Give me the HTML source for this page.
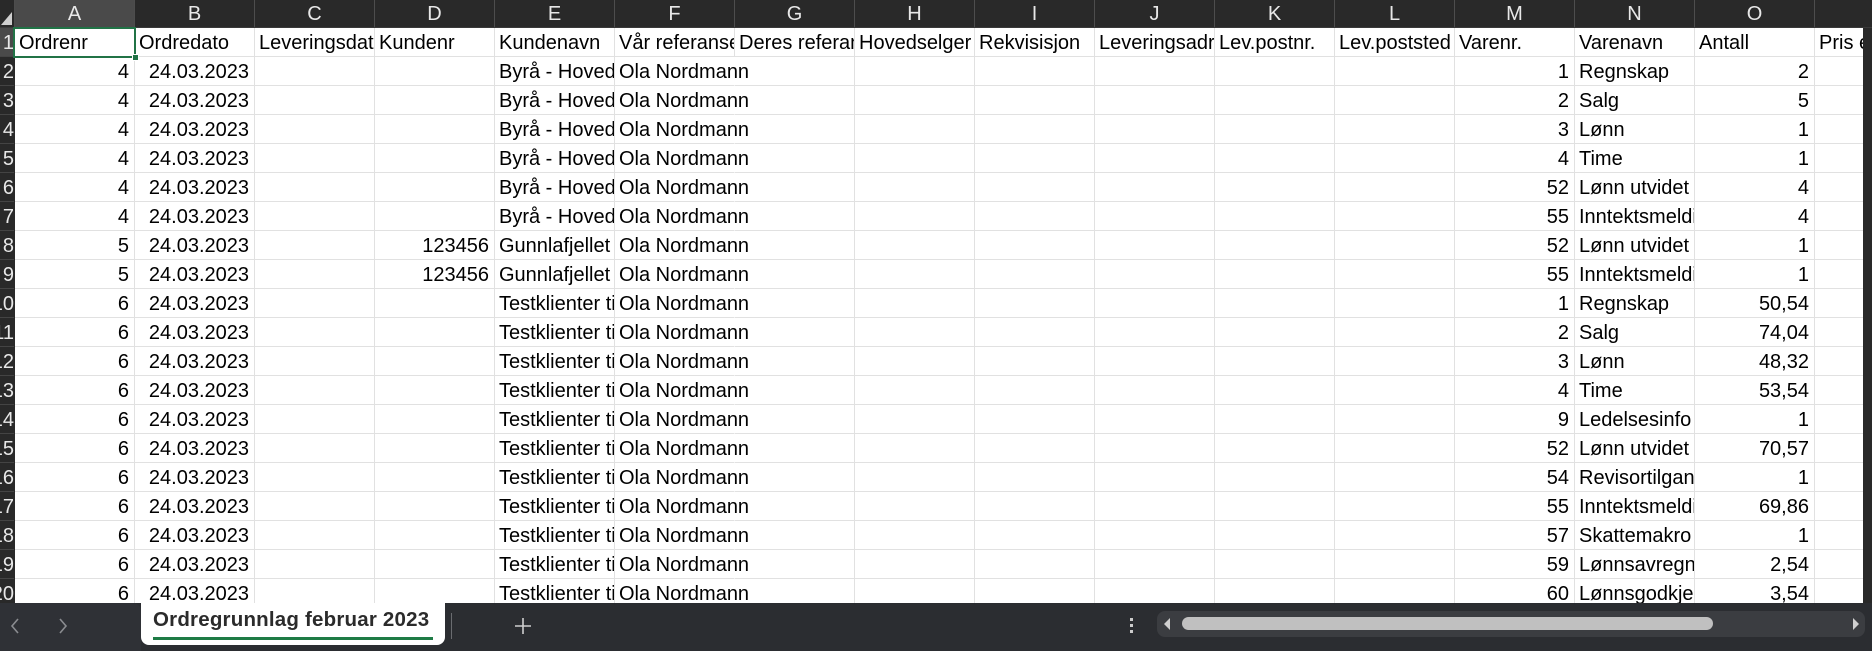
<!DOCTYPE html>
<html><head><meta charset="utf-8"><style>
*{margin:0;padding:0;box-sizing:border-box}
body{width:1872px;height:651px;overflow:hidden;background:#fff;font-family:"Liberation Sans",sans-serif;position:relative}
.hdr{position:absolute;top:0;left:0;width:1872px;height:28px;background:#292929;border-bottom:1px solid #3a3a3a}
.hdr div{position:absolute;top:0;height:27px;width:120px;border-right:1px solid #4d4d4d;color:#e8e8e8;font-size:20px;text-align:center;line-height:29px}
.rh{position:absolute;left:0;top:28px;width:15px;height:580px;background:#292929}
.rh div{position:absolute;left:0;width:14px;height:29px;border-bottom:1px solid #444;color:#e8e8e8;font-size:20px;display:flex;justify-content:flex-end;overflow:hidden;line-height:31px;padding-right:0}
.grid{position:absolute;left:15px;top:28px}
.row{position:absolute;left:0;height:29px;width:1848px}
.c{position:absolute;top:0;height:29px;width:120px;border-right:1px solid #e1e1e1;border-bottom:1px solid #e1e1e1;font-size:20px;line-height:31px;white-space:nowrap;overflow:hidden;padding:0 4px;color:#000;background:#fff}
.r{text-align:right;padding-right:5px}
.ov{overflow:visible;border-right-color:#fff;z-index:2;background:transparent}
.bar{position:absolute;left:0;top:603px;width:1872px;height:48px;background:#2b2d31;z-index:10}
</style></head><body>
<div class="hdr">
<div style="left:0;width:15px;background:#292929"><svg width="14" height="27"><polygon points="12,12 12,25 1,25" fill="#cfcfcf"/></svg></div>
<div style="left:15px;background:#4a4a4a">A</div><div style="left:135px">B</div><div style="left:255px">C</div><div style="left:375px">D</div><div style="left:495px">E</div><div style="left:615px">F</div><div style="left:735px">G</div><div style="left:855px">H</div><div style="left:975px">I</div><div style="left:1095px">J</div><div style="left:1215px">K</div><div style="left:1335px">L</div><div style="left:1455px">M</div><div style="left:1575px">N</div><div style="left:1695px">O</div><div style="left:1815px;width:60px"></div>
</div>
<div class="rh" id="rh"></div>
<div class="grid" id="g"></div>
<div style="position:absolute;left:1863px;top:28px;width:9px;height:575px;background:#292929;z-index:5"></div>
<div class="bar">
<div style="position:absolute;left:0;top:0;width:141px;height:48px;background:#2f3136;border-top-right-radius:8px"></div>
<svg style="position:absolute;left:8px;top:14px" width="14" height="18"><path d="M10 2 L4 9 L10 16" stroke="#8a8c90" stroke-width="1.6" fill="none"/></svg>
<svg style="position:absolute;left:56px;top:14px" width="14" height="18"><path d="M4 2 L10 9 L4 16" stroke="#8a8c90" stroke-width="1.6" fill="none"/></svg>
<div style="position:absolute;left:141px;top:0;width:304px;height:42px;background:#fff;border-radius:0 0 8px 8px"></div>
<div style="position:absolute;left:153px;top:5px;font-size:20.5px;font-weight:bold;color:#2b2b2b;white-space:nowrap;letter-spacing:0.2px">Ordregrunnlag februar 2023</div>
<div style="position:absolute;left:153px;top:34px;width:280px;height:3px;background:#1e7b45"></div>
<div style="position:absolute;left:451px;top:10px;width:1px;height:26px;background:#6a6c70"></div>
<svg style="position:absolute;left:514px;top:14px" width="18" height="18"><path d="M9 1 V17 M1 9 H17" stroke="#cfcfcf" stroke-width="1.6"/></svg>
<div style="position:absolute;left:1130px;top:15px;width:3px;height:3px;background:#ccc;box-shadow:0 6px 0 #ccc,0 12px 0 #ccc"></div>
<div style="position:absolute;left:1157px;top:8px;width:708px;height:26px;background:#3b3d41;border-radius:8px"></div>
<div style="position:absolute;left:1164px;top:15px;width:0;height:0;border-top:6px solid transparent;border-bottom:6px solid transparent;border-right:6px solid #cfcfcf"></div>
<div style="position:absolute;left:1853px;top:15px;width:0;height:0;border-top:6px solid transparent;border-bottom:6px solid transparent;border-left:6px solid #cfcfcf"></div>
<div style="position:absolute;left:1182px;top:14px;width:531px;height:13px;background:#c0c0c0;border-radius:7px"></div>
</div>
<script>
var rows=[["Ordrenr","Ordredato","Leveringsdat","Kundenr","Kundenavn","Vår referanse","Deres referanse","Hovedselger","Rekvisisjon","Leveringsadresse","Lev.postnr.","Lev.poststed","Varenr.","Varenavn","Antall","Pris eks"]];
var M1=[1,2,3,4,52,55],N1=["Regnskap","Salg","Lønn","Time","Lønn utvidet","Inntektsmelding"],O1=[2,5,1,1,4,4];
for(var i=0;i<6;i++)rows.push(["4","24.03.2023","","","Byrå - Hovedkontor","Ola Nordmann","","","","","","",M1[i],N1[i],O1[i],""]);
rows.push(["5","24.03.2023","","123456","Gunnlafjellet","Ola Nordmann","","","","","","","52","Lønn utvidet","1",""]);
rows.push(["5","24.03.2023","","123456","Gunnlafjellet","Ola Nordmann","","","","","","","55","Inntektsmelding","1",""]);
var M3=[1,2,3,4,9,52,54,55,57,59,60],N3=["Regnskap","Salg","Lønn","Time","Ledelsesinfo","Lønn utvidet","Revisortilgang","Inntektsmelding","Skattemakro","Lønnsavregning","Lønnsgodkjenning"],O3=["50,54","74,04","48,32","53,54","1","70,57","1","69,86","1","2,54","3,54"];
for(i=0;i<11;i++)rows.push(["6","24.03.2023","","","Testklienter tilgang","Ola Nordmann","","","","","","",M3[i],N3[i],O3[i],""]);
var g="",rh="";
for(var r=0;r<rows.length;r++){
 rh+='<div style="top:'+(r*29)+'px;'+(r==0?'background:#4a4a4a':'')+'">'+(r+1)+'</div>';
 g+='<div class="row" style="top:'+(r*29)+'px">';
 for(var c=0;c<16;c++){
  var v=rows[r][c],cls="c";
  if(r>0&&(c==0||c==1||c==3||c==12||c==14))cls+=" r";
  if(r>0&&c==5)cls+=" ov";
  g+='<div class="'+cls+'" style="left:'+(c*120)+'px'+(c==15?';width:60px':'')+'">'+v+'</div>';
 }
 g+='</div>';
}
document.getElementById("g").innerHTML=g+'<div style="position:absolute;left:-2px;top:-1px;width:123px;height:31px;border:2px solid #217346;z-index:5"></div><div style="position:absolute;left:117px;top:26px;width:7px;height:7px;background:#217346;border:1px solid #fff;z-index:6"></div>';
document.getElementById("rh").innerHTML=rh;
</script>
</body></html>
